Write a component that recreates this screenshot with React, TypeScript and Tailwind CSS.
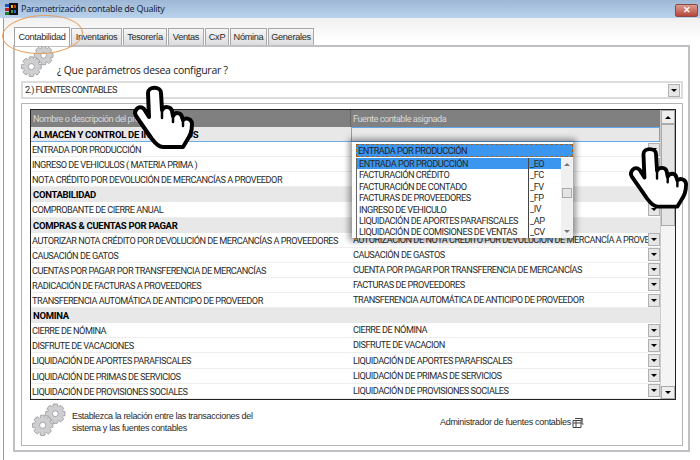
import React from 'react';

const rows: { a: string; b?: string; head?: boolean; btn?: boolean }[] = [
    { a: 'ALMACÉN Y CONTROL DE INVENTARIOS', head: true },
    { a: 'ENTRADA POR PRODUCCIÓN', btn: true },
    { a: 'INGRESO DE VEHICULOS ( MATERIA PRIMA )', btn: true },
    { a: 'NOTA CRÉDITO POR DEVOLUCIÓN DE MERCANCÍAS A PROVEEDOR', btn: true },
    { a: 'CONTABILIDAD', head: true },
    { a: 'COMPROBANTE DE CIERRE ANUAL', btn: true },
    { a: 'COMPRAS & CUENTAS POR PAGAR', head: true },
    { a: 'AUTORIZAR NOTA CRÉDITO POR DEVOLUCIÓN DE MERCANCÍAS A PROVEEDORES', b: 'AUTORIZACIÓN DE NOTA CRÉDITO POR DEVOLUCIÓN DE MERCANCÍA A PROVEEDORES', btn: true },
    { a: 'CAUSACIÓN DE GATOS', b: 'CAUSACIÓN DE GASTOS', btn: true },
    { a: 'CUENTAS POR PAGAR POR TRANSFERENCIA DE MERCANCÍAS', b: 'CUENTA POR PAGAR POR TRANSFERENCIA DE MERCANCÍAS', btn: true },
    { a: 'RADICACIÓN DE FACTURAS A PROVEEDORES', b: 'FACTURAS DE PROVEEDORES', btn: true },
    { a: 'TRANSFERENCIA AUTOMÁTICA DE ANTICIPO DE PROVEEDOR', b: 'TRANSFERENCIA AUTOMÁTICA DE ANTICIPO DE PROVEEDOR', btn: true },
    { a: 'NOMINA', head: true },
    { a: 'CIERRE DE NÓMINA', b: 'CIERRE DE NÓMINA', btn: true },
    { a: 'DISFRUTE DE VACACIONES', b: 'DISFRUTE DE VACACION', btn: true },
    { a: 'LIQUIDACIÓN DE APORTES PARAFISCALES', b: 'LIQUIDACIÓN DE APORTES PARAFISCALES', btn: true },
    { a: 'LIQUIDACIÓN DE PRIMAS DE SERVICIOS', b: 'LIQUIDACIÓN DE PRIMAS DE SERVICIOS', btn: true },
    { a: 'LIQUIDACIÓN DE PROVISIONES SOCIALES', b: 'LIQUIDACIÓN DE PROVISIONES SOCIALES', btn: true },
];

const options = [
    ['ENTRADA POR PRODUCCIÓN', '_EO'],
    ['FACTURACIÓN CRÉDITO', '_FC'],
    ['FACTURACIÓN DE CONTADO', '_FV'],
    ['FACTURAS DE PROVEEDORES', '_FP'],
    ['INGRESO DE VEHICULO', '_IV'],
    ['LIQUIDACIÓN DE APORTES PARAFISCALES', '_AP'],
    ['LIQUIDACIÓN DE COMISIONES DE VENTAS', '_CV'],
];

const tabs = [
    { t: 'Inventarios', w: 'w-[51px]' },
    { t: 'Tesorería', w: 'w-[44px]' },
    { t: 'Ventas', w: 'w-[36px]' },
    { t: 'CxP', w: 'w-[24px]' },
    { t: 'Nómina', w: 'w-[37px]' },
    { t: 'Generales', w: 'w-[46px]' },
];

function DropBtn() {
    return (
        <div className="flex h-[13px] w-[12px] shrink-0 items-center justify-center border border-[#b0b0b0] bg-[#e6e6e6]">
            <div className="h-0 w-0 border-x-[3px] border-t-[3px] border-x-transparent border-t-black" />
        </div>
    );
}

function Hand({ className }: { className: string }) {
    return (
        <svg viewBox="-2 -2 64 66" className={className}>
            <path
                d="M15 7C15 0 28 0 28 7L29 24C31 20 38 20 39 25L40 30C42 26 48 26 49 31L50 34C53 31 59 33 59 38C59 46 57 50 53 56L50 61H30C26 61 22 57 19 53L3 30C0 25 6 18 11 23L16 31Z"
                fill="#fff"
                stroke="#000"
                strokeWidth="4"
                strokeLinejoin="round"
            />
            <path d="M29 24V32M40 30V36M50 34V40" fill="none" stroke="#000" strokeWidth="2.5" strokeLinecap="round" />
        </svg>
    );
}

function Gears({ className }: { className: string }) {
    const tooth = (cx: number, cy: number, r: number) =>
        Array.from({ length: 8 }, (_, i) => (
            <rect
                key={i}
                x={cx - 2.5}
                y={cy - r - 3}
                width={5}
                height={5}
                rx={1}
                transform={`rotate(${i * 45} ${cx} ${cy})`}
            />
        ));
    return (
        <svg viewBox="0 0 36 34" className={className}>
            <g fill="#cfcfd1" stroke="#85858a" strokeWidth="0.7">
                {tooth(24, 11, 7)}
                <circle cx="24" cy="11" r="7.5" stroke="none" />
                <circle cx="24" cy="11" r="3" fill="#fff" />
                {tooth(11, 23, 7.5)}
                <circle cx="11" cy="23" r="8" stroke="none" />
                <circle cx="11" cy="23" r="3.2" fill="#fff" />
            </g>
        </svg>
    );
}

export default function App() {
    return (
        <div className="relative flex h-[460px] w-[700px] flex-col overflow-hidden bg-white font-['Roboto',sans-serif] text-[9.2px] tracking-[-0.5px] text-[#2a2a2a]">
            {/* Barra de titulo */}
            <div className="flex h-[18px] shrink-0 items-center bg-gradient-to-b from-[#9db8d6] to-[#bad2ec] pl-[5px]">
                <svg viewBox="0 0 14 14" className="h-[14px] w-[14px]">
                    <rect x="0" y="2" width="4" height="3" fill="#2050c0" />
                    <rect x="0" y="6" width="4" height="3" fill="#c02020" />
                    <rect x="0" y="10" width="4" height="3" fill="#208030" />
                    <rect x="4" y="1" width="9" height="12" fill="#111" />
                    <rect x="6" y="3" width="2" height="3" fill="#e8c020" />
                    <rect x="9" y="3" width="2" height="3" fill="#d03020" />
                    <rect x="6" y="8" width="2" height="3" fill="#30a040" />
                    <rect x="9" y="8" width="2" height="3" fill="#3060d0" />
                </svg>
                <span className="ml-[2px] font-['Noto_Sans',sans-serif] text-[9px] tracking-[-0.27px] text-[#1c2a3a]">Parametrización contable de Quality</span>
                <div className="ml-auto mr-[2px] mt-[3px] flex h-[13px] w-[23px] items-center justify-center rounded-[2px] border border-[#8a4a44] bg-gradient-to-b from-[#dc9a90] to-[#b8453a] text-[9px] font-bold leading-none text-white">
                    ✕
                </div>
            </div>

            {/* Cuerpo de la ventana */}
            <div className="ml-[3px] flex min-h-0 flex-1 flex-col border-l border-[#9a9a9a] bg-gradient-to-b from-[#f0f0f0] to-white to-[5%] pl-[9px] pr-[10px] pt-[8px] pb-[8px]">
                <div className="flex h-[19px] shrink-0 items-end gap-px pl-[1px]">
                    <div className="relative z-10 -mb-px flex h-[19px] w-[56px] items-center justify-center border border-b-0 border-[#a0a0a0] bg-white pt-px font-['Liberation_Sans',sans-serif] tracking-[-0.35px]">Contabilidad</div>
                    {tabs.map((x) => (
                        <div key={x.t} className={`flex h-[17px] items-center justify-center border border-b-0 border-[#a8a8a8] bg-gradient-to-b from-[#f6f6f6] to-[#dcdcdc] pt-[2px] font-['Liberation_Sans',sans-serif] tracking-[-0.3px] ${x.w}`}>
                            {x.t}
                        </div>
                    ))}
                </div>
                <div className="flex min-h-0 flex-1 flex-col border-2 border-[#c0c0c4] bg-white pl-[6px] pr-[5px] pb-[4px]">
                    <div className="flex h-[34px] shrink-0 items-end">
                        <Gears className="-mt-[2px] h-[32px] w-[34px] self-start" />
                        <span className="mb-[2px] ml-[2px] font-['Open_Sans',sans-serif] text-[10.5px] tracking-[-0.27px] text-[#222]">¿ Que parámetros desea configurar ?</span>
                    </div>
                    <div className="flex h-[18px] shrink-0 items-center justify-between border-2 border-[#dcdcdc] bg-white pl-[2px] pr-[1px]">
                        <span className="tracking-[-0.65px]">2.) FUENTES CONTABLES</span>
                        <DropBtn />
                    </div>
                    <div className="mt-[4px] flex min-h-0 flex-1 flex-col border border-[#b4b4b4] pl-[8px] pr-[6px] pt-[5px]">
                        <div className="flex border border-[#222]">
                            <div className="min-w-0 flex-1">
                                <div className="flex h-[17px] bg-[#808080] text-[#d8d8d8]">
                                    <div className="flex w-[320px] items-center border-r border-[#666] pl-[2px]">Nombre o descripción del proceso</div>
                                    <div className="flex flex-1 items-center pl-[2px]">Fuente contable asignada</div>
                                </div>
                                {rows.map((r, i) => (
                                    <div key={i} className={`flex h-[15.1px] items-center ${r.head ? 'bg-[#e8e8e8]' : 'border-b border-[#eee] bg-white'}`}>
                                        <div className={`h-full w-[320px] shrink-0 whitespace-nowrap pl-[1px] leading-[15px] ${i === 0 ? 'border-b border-[#6eaee8]' : ''} ${r.head ? 'pl-[2px] text-[9.5px] font-bold tracking-[-0.3px] text-black' : ''}`}>{r.a}</div>
                                        <div className={`flex h-full min-w-0 flex-1 items-center pl-[2px] ${i === 0 ? 'border border-[#5ea8ee]' : ''}`}>
                                            <span className="min-w-0 flex-1 overflow-hidden whitespace-nowrap">{r.b ?? ''}</span>
                                            {r.btn && <DropBtn />}
                                        </div>
                                    </div>
                                ))}
                            </div>
                            <div className="flex w-[15px] shrink-0 flex-col border-l border-[#ccc] bg-[#f4f4f4]">
                                <div className="flex h-[14px] shrink-0 items-center justify-center border border-[#aaa] bg-[#eee]">
                                    <div className="h-0 w-0 border-x-[3px] border-b-[3px] border-x-transparent border-b-black" />
                                </div>
                                <div className="h-[102px] shrink-0 border border-[#aaa] bg-[#e4e4e4]" />
                                <div className="flex-1" />
                                <div className="flex h-[13px] shrink-0 items-center justify-center border border-[#aaa] bg-[#eee]">
                                    <div className="h-0 w-0 border-x-[3px] border-t-[3px] border-x-transparent border-t-black" />
                                </div>
                            </div>
                        </div>
                        <div className="flex flex-1 items-start pt-[3px]">
                            <Gears className="ml-[2px] h-[33px] w-[35px]" />
                            <p className="ml-[5px] mt-[7px] w-[190px] font-['Liberation_Sans',sans-serif] text-[9px] leading-[12px] tracking-[-0.33px]">Establezca la relación entre las transacciones del sistema y las fuentes contables</p>
                            <div className="ml-[178px] mt-[13px] flex items-center whitespace-nowrap font-['Liberation_Sans',sans-serif] text-[9px] tracking-[-0.3px]">
                                <span>Administrador de fuentes contables</span>
                                <svg viewBox="0 0 12 11" className="ml-[1px] h-[11px] w-[12px]" fill="none" stroke="#444" strokeWidth="1">
                                    <path d="M1 3.5h8v7H1zM1 6h8M4 3.5v7M3 1.5h7v2M10 1v6h1.500" />
                                </svg>
                            </div>
                        </div>
                    </div>
                </div>
            </div>

            {/* Lista desplegada */}
            <div className="absolute left-[352px] top-[142px] w-[221px] bg-white pl-[4px] pt-[2px] shadow-[0_0_6px_3px_rgba(0,0,0,0.4)]">
                <div className="flex h-[13px] items-center border border-dashed border-[#a06020] bg-[#3b96f0] pl-[1px] text-[#222]">ENTRADA POR PRODUCCIÓN</div>
                <div className="mt-px flex border-l border-[#666]">
                    <div className="flex-1">
                        {options.map(([n, c], i) => (
                            <div key={c} className={`flex h-[11.4px] items-center whitespace-nowrap ${i === 0 ? 'bg-[#3b96f0]' : ''}`}>
                                <span className="w-[172px] border-r border-[#444] pl-[2px] leading-[11.4px]">{n}</span>
                                <span className="pl-[1px]">{c}</span>
                            </div>
                        ))}
                    </div>
                    <div className="flex w-[12px] shrink-0 flex-col items-center bg-[#f0f0f0] py-[5px]">
                        <div className="h-0 w-0 border-x-[3px] border-b-[3px] border-x-transparent border-b-[#777]" />
                        <div className="mt-[22px] h-[10px] w-[10px] border border-[#aaa] bg-[#e4e4e4]" />
                        <div className="mt-auto h-0 w-0 border-x-[3px] border-t-[3px] border-x-transparent border-t-[#777]" />
                    </div>
                </div>
            </div>

            {/* Anotaciones */}
            <div className="absolute left-[2px] top-[15px] h-[39px] w-[81px] -rotate-3 rounded-[50%] border border-[#e8a060]" />
            <Hand className="absolute left-[131px] top-[84px] h-[66px] w-[64px]" />
            <Hand className="absolute left-[627px] top-[145px] h-[65px] w-[62px]" />
        </div>
    );
}
